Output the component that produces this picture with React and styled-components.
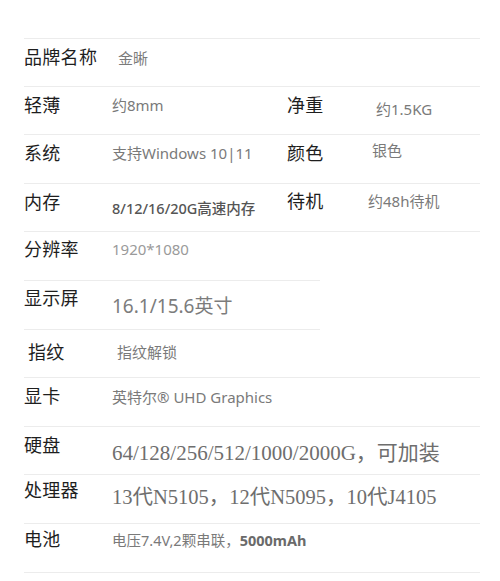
import React from 'react';
import styled, { createGlobalStyle } from 'styled-components';

const GlobalStyle = createGlobalStyle`
  body {
    margin: 0;
    background: #fff;
    font-family: "Noto Sans", "Noto Sans CJK SC", sans-serif;
  }
`;

const Sheet = styled.div`
  width: 500px;
  height: 581px;
  overflow: hidden;
  padding: 38px 0 0 24px;
  box-sizing: border-box;
`;

const Row = styled.div`
  position: relative;
  display: grid;
  grid-template-columns: 88px 175px 89px 1fr;
  height: 48.6px;
  box-sizing: border-box;
  width: 456px;
  border-top: ${(p) => (p.first ? '1px solid #ececec' : 'none')};
  &::after {
    content: '';
    position: absolute;
    left: 0;
    bottom: 0;
    width: ${(p) => p.line || '456px'};
    border-bottom: 1px solid #ececec;
  }
`;

const Label = styled.div`
  font-size: 18px;
  line-height: 24px;
  color: #1e1e1e;
  padding-top: ${(p) => p.dy ?? 6}px;
  margin-left: ${(p) => p.dx || 0}px;
  white-space: nowrap;
  letter-spacing: 0.3px;
`;

const Value = styled.div`
  font-family: ${(p) =>
    p.serif
      ? '"Liberation Serif", "Noto Sans CJK SC", serif'
      : '"Noto Sans", "Noto Sans CJK SC", sans-serif'};
  font-size: ${(p) => p.size || 15}px;
  font-weight: ${(p) => p.weight || 400};
  line-height: 24px;
  color: ${(p) => p.color || '#7a7a7a'};
  padding-top: ${(p) => (p.dy ?? 18) - 12}px;
  margin-left: ${(p) => p.dx || 0}px;
  white-space: nowrap;
  grid-column: ${(p) => (p.wide ? '2 / 5' : 'auto')};
`;

const Strong = styled.b`
  font-weight: 700;
  color: #6a6a6a;
`;

export default function App() {
  return (
    <Sheet>
      <GlobalStyle />
      <Row first>
        <Label>品牌名称</Label>
        <Value dx={6} dy={19} wide>金晰</Value>
      </Row>
      <Row>
        <Label>轻薄</Label>
        <Value>约8mm</Value>
        <Label>净重</Label>
        <Value dy={22}>约1.5KG</Value>
      </Row>
      <Row>
        <Label>系统</Label>
        <Value>支持Windows 10|11</Value>
        <Label>颜色</Label>
        <Value dx={-4} dy={15}>银色</Value>
      </Row>
      <Row>
        <Label>内存</Label>
        <Value dy={24} size={14.5} weight={500} color="#555">8/12/16/20G高速内存</Value>
        <Label dy={5}>待机</Label>
        <Value dx={-8} dy={17}>约48h待机</Value>
      </Row>
      <Row line="296px">
        <Label dy={5}>分辨率</Label>
        <Value dy={17} color="#9a9a9a">1920*1080</Value>
      </Row>
      <Row line="296px">
        <Label dy={5}>显示屏</Label>
        <Value dy={25} size={19} color="#7c7c7c" wide>16.1/15.6英寸</Value>
      </Row>
      <Row>
        <Label dx={4} dy={10}>指纹</Label>
        <Value dx={5} dy={22} wide>指纹解锁</Value>
      </Row>
      <Row>
        <Label>显卡</Label>
        <Value dy={19} wide>英特尔® UHD Graphics</Value>
      </Row>
      <Row>
        <Label>硬盘</Label>
        <Value serif dy={26} size={21} color="#6e6e6e" wide>
          64/128/256/512/1000/2000G，可加装
        </Value>
      </Row>
      <Row>
        <Label dy={3}>处理器</Label>
        <Value serif dy={22} size={20.5} color="#6e6e6e" wide>
          13代N5105，12代N5095，10代J4105
        </Value>
      </Row>
      <Row>
        <Label dy={3}>电池</Label>
        <Value dy={16} size={14.5} wide>
          电压7.4V,2颗串联，<Strong>5000mAh</Strong>
        </Value>
      </Row>
    </Sheet>
  );
}
